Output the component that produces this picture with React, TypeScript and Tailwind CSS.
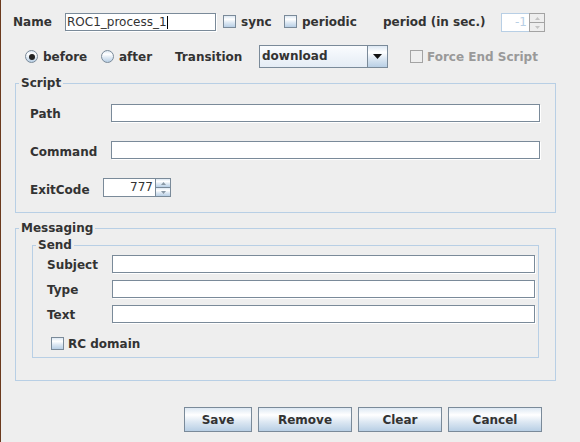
import React from "react";

const ocean =
  "bg-[linear-gradient(to_bottom,#dde8f3_0%,#ffffff_30%,#dde8f3_60%,#b8cfe5_100%)]";

function CheckBox({ disabled = false, className = "" }: { disabled?: boolean; className?: string }) {
  return (
    <span
      className={`inline-block w-[13px] h-[13px] shrink-0 border ${
        disabled ? "border-[#a3a3a3] bg-[#eeeeee]" : `border-[#7a8a99] ${ocean}`
      } ${className}`}
    />
  );
}

function Radio({ checked = false, className = "" }: { checked?: boolean; className?: string }) {
  return (
    <span
      className={`inline-flex items-center justify-center w-[13px] h-[13px] shrink-0 rounded-full border border-[#7a8a99] ${ocean} ${className}`}
    >
      {checked && <span className="w-[6px] h-[6px] rounded-full bg-[#222222]" />}
    </span>
  );
}

function TextField({ className = "", children }: { className?: string; children?: React.ReactNode }) {
  return (
    <div
      className={`h-[18px] border border-[#7a8a99] bg-white shadow-[1px_1px_0_#ffffff] ${className}`}
    >
      {children}
    </div>
  );
}

function Arrow({ up, color }: { up: boolean; color: string }) {
  return (
    <svg width="5" height="3" viewBox="0 0 5 3">
      <path d={up ? "M0 3 L2.5 0 L5 3 Z" : "M0 0 L5 0 L2.5 3 Z"} fill={color} />
    </svg>
  );
}

function SpinButtons({ disabled = false }: { disabled?: boolean }) {
  const color = disabled ? "#c4c4c4" : "#8a99a6";
  const btn = disabled ? "bg-[#eeeeee]" : ocean;
  return (
    <div
      className={`w-[16px] h-[19px] flex flex-col border ${
        disabled ? "border-[#a3a3a3]" : "border-[#7a8a99]"
      }`}
    >
      <div className={`h-[8px] flex items-center justify-center ${btn}`}>
        <Arrow up color={color} />
      </div>
      <div
        className={`h-[9px] flex items-center justify-center border-t ${
          disabled ? "border-[#a3a3a3]" : "border-[#7a8a99]"
        } ${btn}`}
      >
        <Arrow up={false} color={color} />
      </div>
    </div>
  );
}

function Button({ label, className = "" }: { label: string; className?: string }) {
  return (
    <button
      className={`h-[25px] border border-[#7a8a99] ${ocean} text-[#333333] font-bold text-[12px] ${className}`}
    >
      {label}
    </button>
  );
}

export default function App() {
  return (
    <div className="w-[580px] h-[442px] overflow-hidden flex flex-col bg-[#eeeeee] border-l border-[#6b3a1e] text-[12px] font-bold text-[#333333] font-['DejaVu_Sans',sans-serif]">
      {/* name row */}
      <div className="mt-[13px] h-[19px] flex items-start">
        <span className="ml-[12px] w-[52px] leading-[19px]">Name</span>
        <TextField className="w-[151px] flex items-center pl-[1px] font-normal leading-[16px]">
          <span>ROC1_process_1</span>
          <span className="w-[1px] h-[13px] bg-black" />
        </TextField>
        <CheckBox className="ml-[7px] mt-[2px]" />
        <span className="ml-[5px] w-[43px] leading-[19px]">sync</span>
        <CheckBox className="mt-[2px]" />
        <span className="ml-[5px] w-[81px] leading-[19px]">periodic</span>
        <span className="w-[118px] leading-[19px]">period (in sec.)</span>
        <div className="flex">
          <div className="w-[28px] h-[19px] border border-r-0 border-[#b8cfe5] bg-white text-right pr-[2px] font-normal text-[#b8cfe5] leading-[17px]">
            -1
          </div>
          <SpinButtons disabled />
        </div>
      </div>

      {/* transition row */}
      <div className="mt-[13px] h-[23px] flex items-center">
        <Radio checked className="ml-[24px]" />
        <span className="ml-[5px] w-[58px]">before</span>
        <Radio />
        <span className="ml-[5px] w-[56px]">after</span>
        <span className="w-[84px]">Transition</span>
        <div className="w-[129px] h-[23px] flex border border-[#7a8a99]">
          <div className="flex-1 pl-[2px] leading-[21px] bg-[linear-gradient(to_bottom,#fafcfe,#e4ecf5)] border-r border-[#7a8a99]">
            download
          </div>
          <div className={`w-[19px] flex items-center justify-center ${ocean}`}>
            <svg width="9" height="5" viewBox="0 0 9 5">
              <path d="M0 0 L9 0 L4.5 5 Z" fill="#111111" />
            </svg>
          </div>
        </div>
        <CheckBox disabled className="ml-[22px]" />
        <span className="ml-[4px] text-[#999999]">Force End Script</span>
      </div>

      {/* script group */}
      <fieldset className="mt-[8px] ml-[14px] w-[541px] border border-[#b8cfe5]">
        <legend className="ml-[3px] px-[2px] leading-[14px]">Script</legend>
        <div className="pt-[14px] pl-[14px] pr-[15px] pb-[15px] flex flex-col gap-[18px]">
          <div className="h-[19px] flex items-start">
            <span className="w-[81px] leading-[19px] mt-[1px]">Path</span>
            <TextField className="flex-1" />
          </div>
          <div className="h-[19px] flex items-start">
            <span className="w-[81px] leading-[19px] mt-[2px]">Command</span>
            <TextField className="flex-1" />
          </div>
          <div className="h-[19px] flex items-start">
            <span className="w-[73px] leading-[19px] mt-[3px]">ExitCode</span>
            <div className="flex">
              <div className="w-[52px] h-[19px] border border-r-0 border-[#7a8a99] bg-white text-right pr-[2px] font-normal leading-[17px]">
                777
              </div>
              <SpinButtons />
            </div>
          </div>
        </div>
      </fieldset>

      {/* messaging group */}
      <fieldset className="mt-[8px] ml-[14px] w-[541px] border border-[#b8cfe5]">
        <legend className="ml-[3px] px-[2px] leading-[14px]">Messaging</legend>
        <div className="pt-[3px] px-[16px] pb-[22px]">
          <fieldset className="border border-[#b8cfe5]">
            <legend className="ml-[3px] px-[2px] leading-[14px]">Send</legend>
            <div className="pt-[3px] pl-[14px] pr-[3px] pb-[4px] flex flex-col gap-[6px]">
              {["Subject", "Type", "Text"].map((l) => (
                <div key={l} className="h-[19px] flex items-start">
                  <span className="w-[65px] leading-[19px] mt-[1px]">{l}</span>
                  <TextField className="flex-1" />
                </div>
              ))}
              <div className="mt-[4px] h-[19px] flex items-center">
                <CheckBox className="ml-[4px]" />
                <span className="ml-[4px]">RC domain</span>
              </div>
            </div>
          </fieldset>
        </div>
      </fieldset>

      {/* buttons */}
      <div className="mt-[26px] pr-[38px] flex justify-end gap-[6px]">
        <Button label="Save" className="w-[68px]" />
        <Button label="Remove" className="w-[94px]" />
        <Button label="Clear" className="w-[84px]" />
        <Button label="Cancel" className="w-[94px]" />
      </div>
    </div>
  );
}
